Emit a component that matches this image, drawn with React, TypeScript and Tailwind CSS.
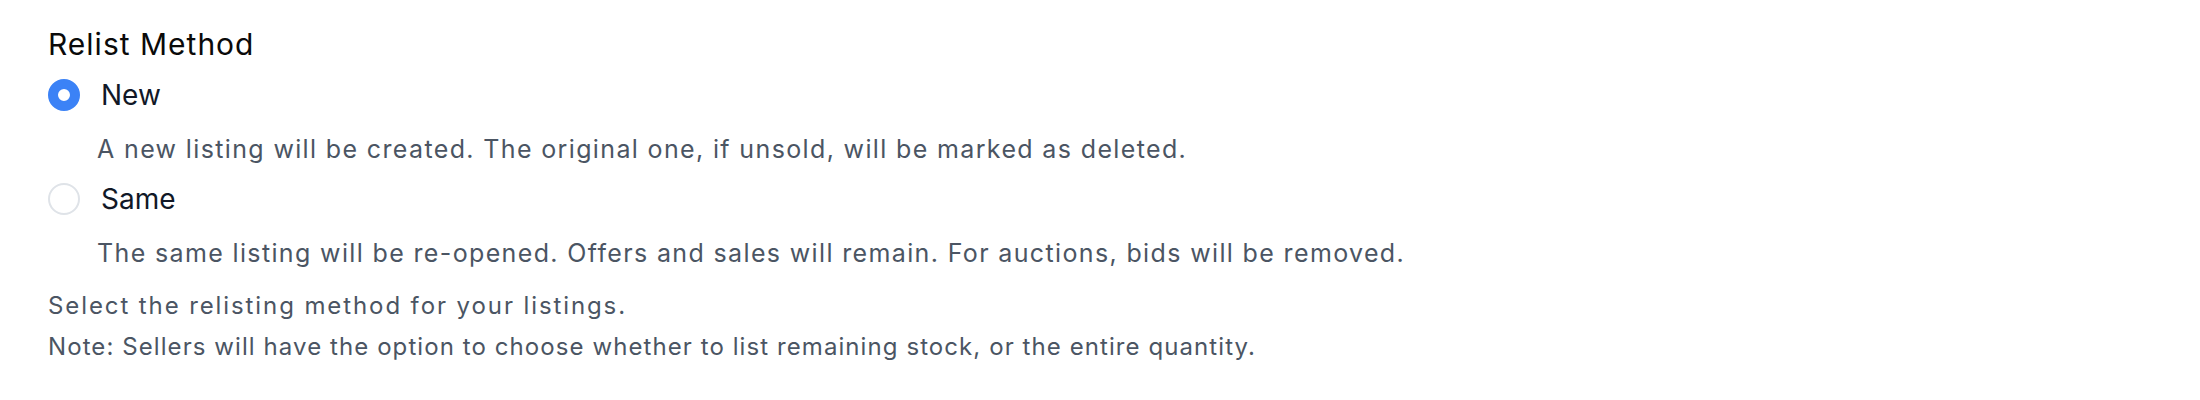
import { useState } from "react";

const options = [
  {
    value: "new",
    label: "New",
    description:
      "A new listing will be created. The original one, if unsold, will be marked as deleted.",
  },
  {
    value: "same",
    label: "Same",
    description:
      "The same listing will be re-opened. Offers and sales will remain. For auctions, bids will be removed.",
  },
];

function Radio({ checked }: { checked: boolean }) {
  return (
    <span
      className={`block w-[32px] h-[32px] rounded-full shrink-0 bg-white ${
        checked ? "border-[10px] border-[#3b82f6]" : "border-2 border-[#dfe3e8]"
      }`}
    />
  );
}

export default function App() {
  const [method, setMethod] = useState("new");

  return (
    <div
      className="w-[2200px] h-[400px] bg-white pl-[48px] pt-[26px]"
      style={{ fontFamily: "Inter, 'Noto Sans', sans-serif" }}
    >
      <h3 className="text-[30px] leading-[36px] text-[#0a0a0a] tracking-[1px]">
        Relist Method
      </h3>

      <div role="radiogroup">
        {options.map((option, key) => (
          <div key={option.value} className={key == 0 ? "mt-[17px]" : "mt-[19px]"}>
            <label
              className="flex items-center h-[32px] gap-[21px] cursor-pointer"
              onClick={() => setMethod(option.value)}
            >
              <Radio checked={method == option.value} />
              <span className="text-[28px] leading-[32px] text-[#111827] tracking-[0px]">
                {option.label}
              </span>
            </label>
            <p className="mt-[23px] pl-[49px] text-[25px] leading-[30px] text-[#4b5563] tracking-[1.36px]">
              {option.description}
            </p>
          </div>
        ))}
      </div>

      <p className="mt-[23px] text-[24px] leading-[30px] text-[#4b5563] tracking-[1.9px]">
        Select the relisting method for your listings.
      </p>
      <p className="mt-[11px] text-[24px] leading-[30px] text-[#4b5563] tracking-[1.08px]">
        Note: Sellers will have the option to choose whether to list remaining stock, or the entire
        quantity.
      </p>
    </div>
  );
}
